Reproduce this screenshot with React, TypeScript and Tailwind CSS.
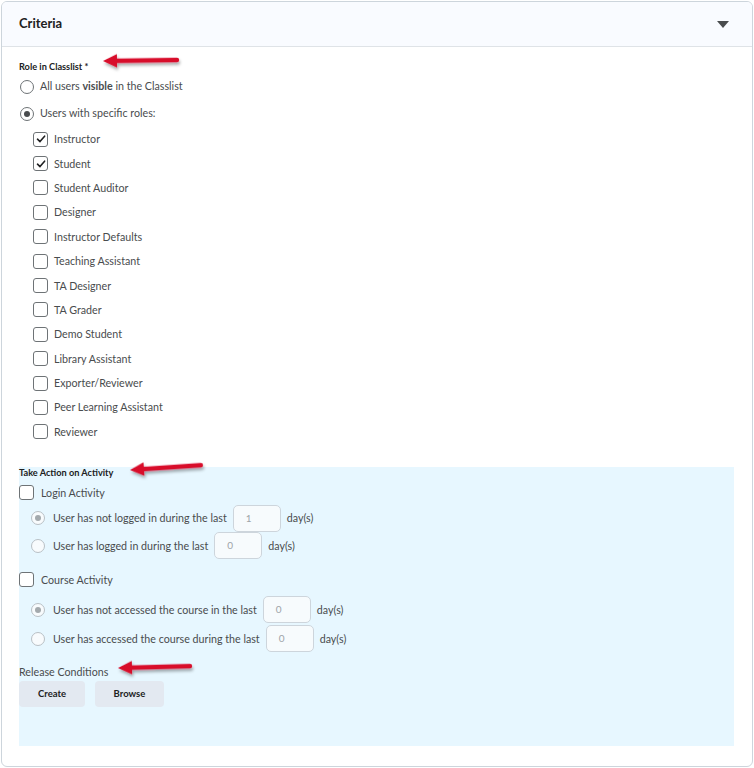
import React from 'react';

const roles = [
  { label: 'Instructor', checked: true },
  { label: 'Student', checked: true },
  { label: 'Student Auditor', checked: false },
  { label: 'Designer', checked: false },
  { label: 'Instructor Defaults', checked: false },
  { label: 'Teaching Assistant', checked: false },
  { label: 'TA Designer', checked: false },
  { label: 'TA Grader', checked: false },
  { label: 'Demo Student', checked: false },
  { label: 'Library Assistant', checked: false },
  { label: 'Exporter/Reviewer', checked: false },
  { label: 'Peer Learning Assistant', checked: false },
  { label: 'Reviewer', checked: false },
];

const Checkbox = ({ checked }: { checked?: boolean }) => (
  <span className="flex h-[15px] w-[15px] shrink-0 items-center justify-center rounded-[3px] border border-[#6e7376] bg-white">
    {checked && (
      <svg width="10" height="10" viewBox="0 0 10 10">
        <path d="M1.5 5.2 L4 7.6 L8.6 2.2" fill="none" stroke="#202122" strokeWidth="1.6" strokeLinecap="round" strokeLinejoin="round" />
      </svg>
    )}
  </span>
);

const Radio = ({ checked, muted }: { checked?: boolean; muted?: boolean }) => (
  <span
    className={
      muted
        ? 'flex h-[14px] w-[14px] shrink-0 items-center justify-center rounded-full border border-[#b9c0c5] bg-[#f8fbfd]'
        : 'flex h-[14px] w-[14px] shrink-0 items-center justify-center rounded-full border border-[#6e7376] bg-white'
    }
  >
    {checked && (
      <span className={muted ? 'h-[6px] w-[6px] rounded-full bg-[#a3a9ad]' : 'h-[6px] w-[6px] rounded-full bg-[#494c4e]'} />
    )}
  </span>
);

const DayRow = ({ text, value, checked, h }: { text: string; value: string; checked?: boolean; h: string }) => (
  <div className={`flex items-center pl-[12px] ${h}`}>
    <Radio checked={checked} muted />
    <span className="ml-[8px]">{text}</span>
    <span className="ml-[6px] flex h-[27px] w-[48px] shrink-0 items-center rounded-[5px] border border-[#cdd5dc] bg-[#f7fbfd] pl-[12px] text-[10px] text-[#9ea4a8]">
      {value}
    </span>
    <span className="ml-[6px]">day(s)</span>
  </div>
);

// red annotation arrow, tip at the left end
const Arrow = ({ className, length }: { className: string; length: number }) => (
  <svg
    className={`pointer-events-none absolute overflow-visible ${className}`}
    width={length + 4}
    height="20"
    viewBox={`0 0 ${length + 4} 20`}
  >
    <defs>
      <filter id={`sh${length}`} x="-20%" y="-50%" width="140%" height="200%">
        <feDropShadow dx="1" dy="2.5" stdDeviation="1.4" floodColor="#000" floodOpacity="0.35" />
      </filter>
    </defs>
    <g filter={`url(#sh${length})`}>
      <line x1="15" y1="10" x2={length} y2="10" stroke="#d8102c" strokeWidth="4.4" strokeLinecap="round" />
      <polygon points="2,10 16,3.2 16,16.8" fill="#d8102c" />
    </g>
  </svg>
);

export default function App() {
  return (
    <div className="relative h-[768px] w-[754px] bg-white pl-px pt-px text-[10.7px] text-[#494c4e] [font-family:Lato,'Noto_Sans',sans-serif]">
      <div className="h-[766px] w-[752px] overflow-hidden rounded-[6px] border border-[#cdd5dc]">
        <div className="flex h-[45px] items-center justify-between border-b border-[#dfe3e7] bg-[#f9fbff] pl-[17px] pr-[23px]">
          <span className="text-[13px] font-bold text-[#202122]">Criteria</span>
          <svg width="12" height="7" viewBox="0 0 12 7">
            <path d="M0 0 H12 L6 7 Z" fill="#494c4e" />
          </svg>
        </div>

        <div className="px-[17px] pt-[13px]">
          <div className="flex h-[13px] items-center text-[9.2px] font-bold text-[#202122]">Role in Classlist *</div>
          <div className="flex h-[27px] items-center gap-[6px] pl-px">
            <Radio />
            <span>
              All users <b className="font-bold">visible</b> in the Classlist
            </span>
          </div>
          <div className="flex h-[27px] items-center gap-[6px] pl-px">
            <Radio checked />
            <span>Users with specific roles:</span>
          </div>
          <div className="pl-[14px]">
            {roles.map((r) => (
              <div key={r.label} className="flex h-[24.4px] items-center gap-[6px]">
                <Checkbox checked={r.checked} />
                <span>{r.label}</span>
              </div>
            ))}
          </div>

          <div className="mt-[22.8px] mr-[1px] h-[279px] bg-[#e7f7ff]">
            <div className="flex h-[13px] items-center text-[9.2px] font-bold text-[#202122]">Take Action on Activity</div>
            <div className="flex h-[26px] items-center gap-[7px]">
              <Checkbox />
              <span>Login Activity</span>
            </div>
            <DayRow h="h-[25px]" text="User has not logged in during the last" value="1" checked />
            <DayRow h="h-[30px]" text="User has logged in during the last" value="0" />
            <div className="flex h-[38px] items-center gap-[7px]">
              <Checkbox />
              <span>Course Activity</span>
            </div>
            <DayRow h="h-[22px]" text="User has not accessed the course in the last" value="0" checked />
            <DayRow h="h-[36px]" text="User has accessed the course during the last" value="0" />
            <div className="flex h-[24px] items-center pt-[6px]">Release Conditions</div>
            <div className="flex gap-[10px]">
              <button className="h-[26px] w-[66px] rounded-[4px] bg-[#e3e9f1] text-[9.5px] font-bold text-[#202122]">Create</button>
              <button className="h-[26px] w-[69px] rounded-[4px] bg-[#e3e9f1] text-[9.5px] font-bold text-[#202122]">Browse</button>
            </div>
          </div>
        </div>
      </div>

      <Arrow length={76} className="left-[101px] top-[51px] origin-[2px_10px] rotate-[-0.8deg]" />
      <Arrow length={73} className="left-[128px] top-[460px] origin-[2px_10px] rotate-[-3.9deg]" />
      <Arrow length={74} className="left-[116px] top-[658px] origin-[2px_10px] rotate-[-1.5deg]" />
    </div>
  );
}
